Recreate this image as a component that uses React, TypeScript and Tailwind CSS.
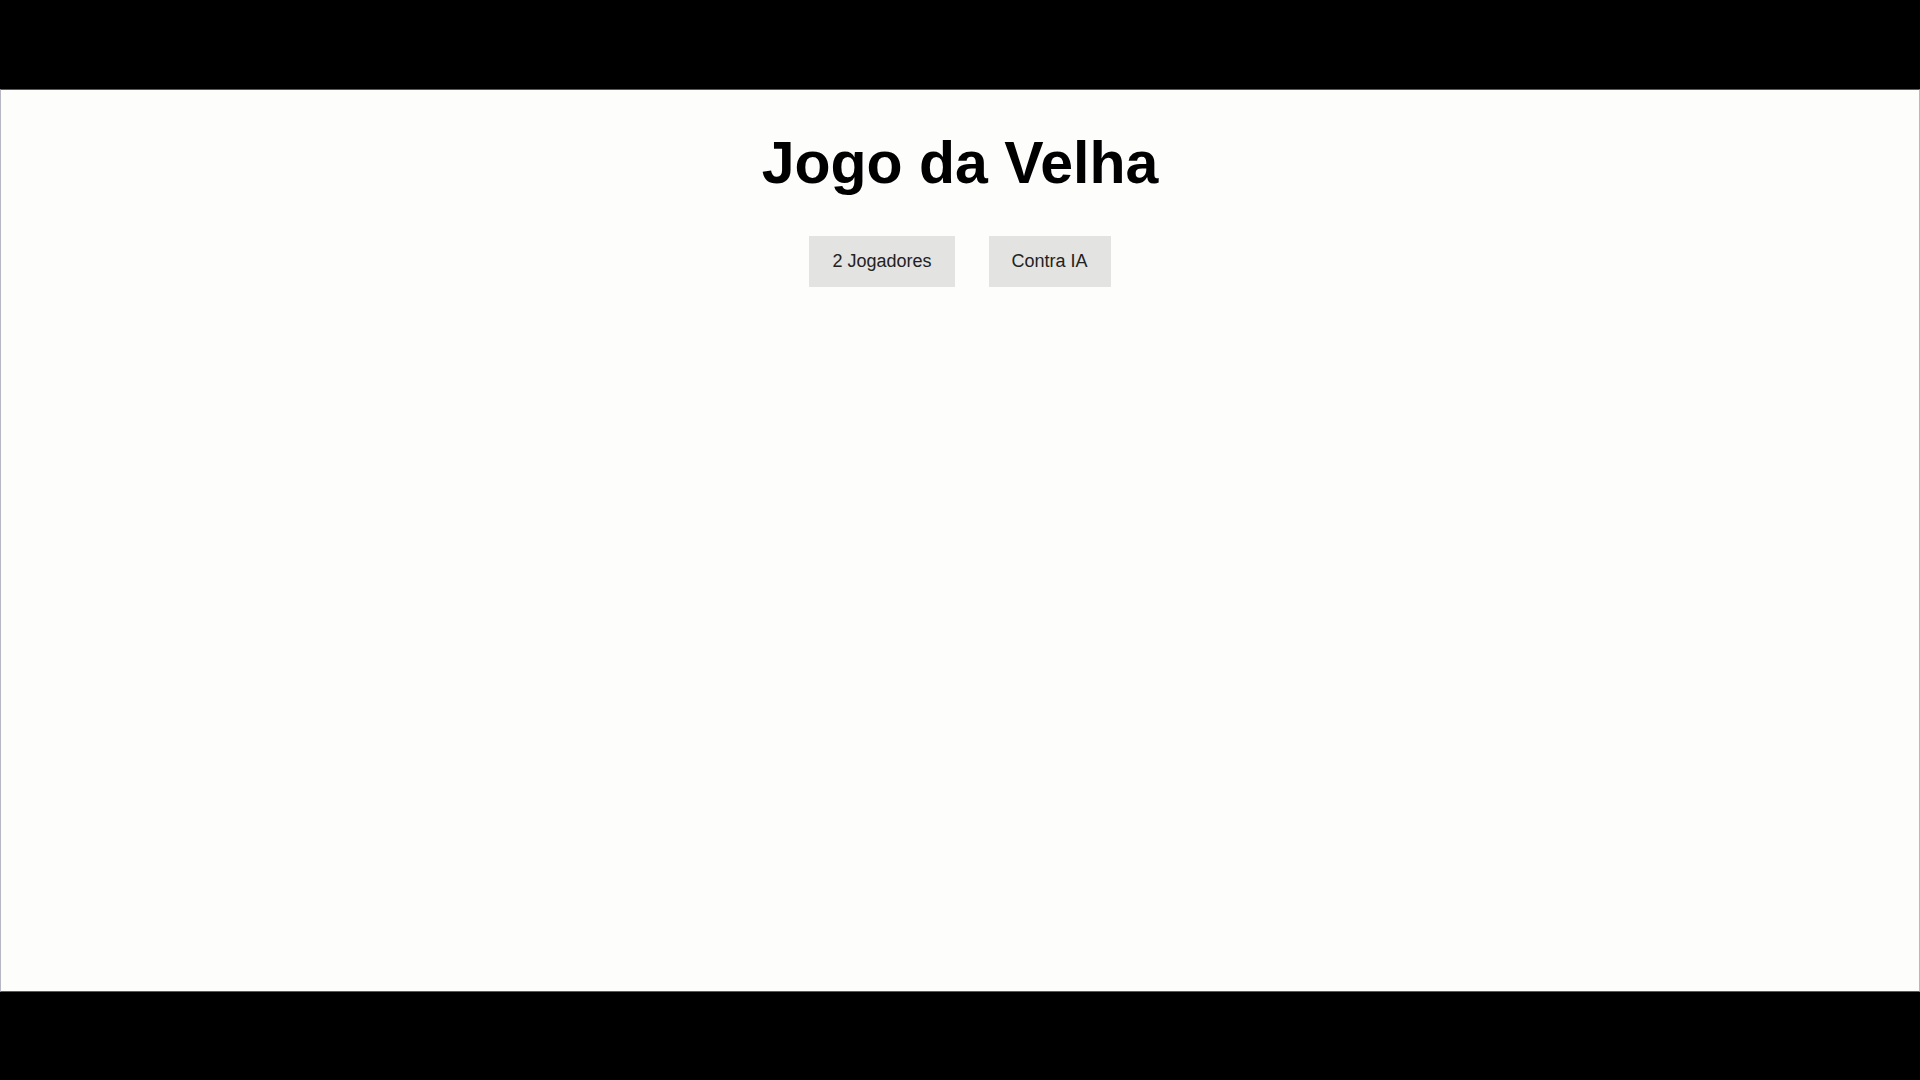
export default function App() {
    return (
        <div className="h-screen flex flex-col bg-black" style={{ fontFamily: '"Liberation Sans", Arial, sans-serif' }}>
            <div className="h-[89px] shrink-0" />
            <div className="flex-1 bg-[#fdfdfb] border-y border-x border-y-[#5a5a66] border-x-[#b8b8c4] flex flex-col items-center">
                <h1 className="mt-[44px] text-[59px] leading-none font-bold text-black">Jogo da Velha</h1>
                <div className="mt-[43px] flex gap-[34px]">
                    <button className="bg-[#e3e3e1] text-[#222] text-[18px] leading-[21px] px-[23px] py-[15px]">
                        2 Jogadores
                    </button>
                    <button className="bg-[#e3e3e1] text-[#222] text-[18px] leading-[21px] px-[23px] py-[15px]">
                        Contra IA
                    </button>
                </div>
            </div>
            <div className="h-[88px] shrink-0" />
        </div>
    );
}
